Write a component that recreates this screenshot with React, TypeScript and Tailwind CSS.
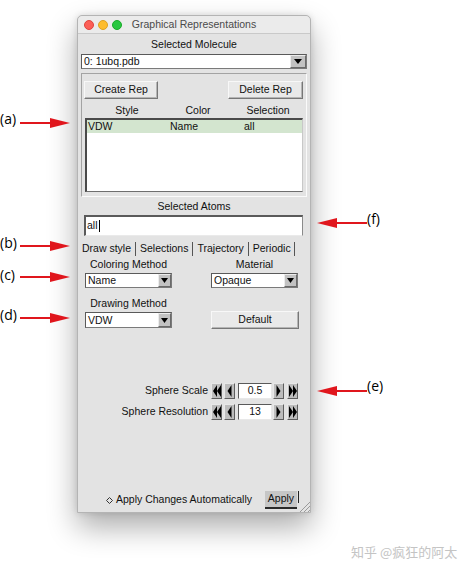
import React from "react";

const ui = "font-['Liberation_Sans',Arial,sans-serif] text-[10.5px] text-[#111]";

function DownTri({ w = 8, h = 5 }: { w?: number; h?: number }) {
  return (
    <svg width={w} height={h} viewBox={`0 0 ${w} ${h}`}>
      <polygon points={`0,0 ${w},0 ${w / 2},${h}`} fill="#000" />
    </svg>
  );
}

function Dropdown({ text, className, arrowW = 13 }: { text: string; className: string; arrowW?: number }) {
  return (
    <div className={`flex bg-white border border-[#7a7a7a] border-t-[#5a5a5a] border-l-[#5a5a5a] ${className}`}>
      <div className="flex-1 pl-[2px] leading-[13px] flex items-center">{text}</div>
      <div
        className="flex items-center justify-center bg-[#c2c2c2] border border-t-[#ececec] border-l-[#ececec] border-b-[#6a6a6a] border-r-[#6a6a6a]"
        style={{ width: arrowW }}
      >
        <DownTri w={arrowW > 13 ? 8 : 7} h={5} />
      </div>
    </div>
  );
}

function RaisedButton({ label, className }: { label: string; className: string }) {
  return (
    <div
      className={`flex items-center justify-center bg-[#e9e9e9] border border-t-[#f8f8f8] border-l-[#f8f8f8] border-b-[#777] border-r-[#777] shadow-[inset_-1px_-1px_0_#b5b5b5] ${className}`}
    >
      {label}
    </div>
  );
}

function Tri({ dir, double }: { dir: "l" | "r"; double?: boolean }) {
  const one = (x: number) =>
    dir === "l"
      ? `${x + 4},0 ${x},6 ${x + 4},12`
      : `${x},0 ${x + 4},6 ${x},12`;
  return (
    <svg width={double ? 8 : 5} height={12} viewBox={`0 0 ${double ? 8 : 5} 12`}>
      {double ? (
        <>
          <polygon points={one(0)} fill="#000" />
          <polygon points={one(4)} fill="#000" />
        </>
      ) : (
        <polygon points={one(0.5)} fill="#000" />
      )}
    </svg>
  );
}

function SpinBtn({ dir, double }: { dir: "l" | "r"; double?: boolean }) {
  return (
    <div className="w-[11px] h-full flex items-center justify-center bg-[#bdbdbd] border border-t-[#e8e8e8] border-l-[#e8e8e8] border-b-[#5e5e5e] border-r-[#5e5e5e]">
      <Tri dir={dir} double={double} />
    </div>
  );
}

function SpinRow({ label, value }: { label: string; value: string }) {
  return (
    <div className="flex items-center justify-end h-[16px] pr-[12px]">
      <span className="mr-[3px]">{label}</span>
      <div className="flex h-[16px] items-stretch">
        <SpinBtn dir="l" double />
        <div className="w-[2px]" />
        <SpinBtn dir="l" />
        <div className="w-[3px]" />
        <div className="w-[34px] bg-white border border-t-[#5a5a5a] border-l-[#5a5a5a] border-b-[#e8e8e8] border-r-[#e8e8e8] flex items-center justify-center">
          {value}
        </div>
        <div className="w-[1px]" />
        <SpinBtn dir="r" />
        <div className="w-[3px]" />
        <SpinBtn dir="r" double />
      </div>
    </div>
  );
}

function Arrow({ left }: { left?: boolean }) {
  return (
    <svg width={50} height={12} viewBox="0 0 50 12">
      {left ? (
        <>
          <line x1={18} y1={6} x2={50} y2={6} stroke="#e0161d" strokeWidth={2} />
          <polygon points="0,6 20,1 20,11" fill="#e0161d" />
        </>
      ) : (
        <>
          <line x1={0} y1={6} x2={32} y2={6} stroke="#e0161d" strokeWidth={2} />
          <polygon points="50,6 30,1 30,11" fill="#e0161d" />
        </>
      )}
    </svg>
  );
}

function Label({ t, x, y }: { t: string; x: number; y: number }) {
  return (
    <div
      className="absolute font-['Open_Sans',sans-serif] text-[14px] leading-[16px] text-black"
      style={{ left: x, top: y }}
    >
      {t}
    </div>
  );
}

export default function App() {
  return (
    <div className="relative w-[474px] h-[572px] bg-white overflow-hidden">
      <div className="pl-[77px] pt-[15px]">
        <div
          className={`w-[234px] h-[498px] flex flex-col bg-[#e3e3e3] border border-[#b4b4b4] rounded-t-[5px] shadow-[0_14px_30px_rgba(0,0,0,0.33),0_0_6px_rgba(0,0,0,0.12)] ${ui}`}
        >
          {/* title bar */}
          <div className="relative h-[18px] flex items-center justify-center bg-[#ebebeb] border-b border-[#c9c9c9] rounded-t-[5px]">
            <div className="absolute left-[6px] top-[4px] flex gap-[4px]">
              <div className="w-[10px] h-[10px] rounded-full bg-[#fc5f57] border border-[#e0443e]" />
              <div className="w-[10px] h-[10px] rounded-full bg-[#fdbc2e] border border-[#dea123]" />
              <div className="w-[10px] h-[10px] rounded-full bg-[#29c740] border border-[#1aab29]" />
            </div>
            <span className="text-[#4a4a4a] mt-[1px]">Graphical Representations</span>
          </div>

          {/* Selected Molecule */}
          <div className="h-[20px] flex items-center justify-center pt-[1px]">Selected Molecule</div>
          <Dropdown text="0: 1ubq.pdb" className="mx-[3px] h-[15px]" arrowW={16} />

          {/* group box */}
          <div className="mx-[3px] mt-[4px] h-[124px] border border-t-[#a3a3a3] border-l-[#a3a3a3] border-b-[#fafafa] border-r-[#fafafa] flex flex-col">
            <div className="flex justify-between pl-[2px] pr-[3px] pt-[7px]">
              <RaisedButton label="Create Rep" className="w-[74px] h-[18px]" />
              <RaisedButton label="Delete Rep" className="w-[75px] h-[18px]" />
            </div>
            <div className="flex h-[13px] mt-[5px] items-center pl-[3px]">
              <span className="w-[84px] text-center">Style</span>
              <span className="w-[58px] text-center">Color</span>
              <span className="w-[64px] ml-[9px] text-center">Selection</span>
            </div>
            <div className="ml-[3px] w-[218px] h-[74px] mt-[1px] bg-white border border-[#6e6e6e] border-t-2 border-l-2 border-t-[#4a4a4a] border-l-[#4a4a4a] border-r-[#c8c8c8]">
              <div className="flex h-[13px] items-center bg-[#d3e5cf] pl-[1px]">
                <span className="w-[82px]">VDW</span>
                <span className="w-[74px]">Name</span>
                <span>all</span>
              </div>
            </div>
          </div>

          {/* Selected Atoms */}
          <div className="h-[18px] flex items-center justify-center pt-[2px]">Selected Atoms</div>
          <div className="ml-[6px] mr-[7px] h-[21px] bg-white border border-[#8a8a8a] border-t-2 border-l-2 border-t-[#5a5a5a] border-l-[#5a5a5a] border-b-[#eaeaea] flex items-center pl-[1px]">
            <span>all</span>
            <span className="w-[1.5px] h-[12px] bg-black ml-[1px]" />
          </div>

          {/* tabs */}
          <div className="h-[16px] mt-[5px] flex items-center pl-[4px]">
            <span>Draw style</span>
            <span className="w-px h-[14px] bg-[#555] mx-[4px]" />
            <span>Selections</span>
            <span className="w-px h-[14px] bg-[#555] mx-[4px]" />
            <span>Trajectory</span>
            <span className="w-px h-[14px] bg-[#555] mx-[4px]" />
            <span>Periodic</span>
            <span className="w-px h-[14px] bg-[#555] ml-[3px]" />
          </div>

          {/* coloring / material */}
          <div className="flex pl-[7px] gap-[39px]">
            <div className="w-[87px] flex flex-col">
              <div className="h-[15px] flex items-center justify-center">Coloring Method</div>
              <Dropdown text="Name" className="h-[15px] mt-[1px]" />
            </div>
            <div className="w-[87px] flex flex-col">
              <div className="h-[15px] flex items-center justify-center">Material</div>
              <Dropdown text="Opaque" className="h-[15px] mt-[1px]" />
            </div>
          </div>

          {/* drawing method */}
          <div className="flex pl-[7px] gap-[39px] mt-[9px]">
            <div className="w-[87px] flex flex-col">
              <div className="h-[14px] flex items-center justify-center">Drawing Method</div>
              <Dropdown text="VDW" className="h-[16px] mt-[1px]" />
            </div>
            <div className="w-[88px] flex flex-col">
              <div className="h-[14px]" />
              <RaisedButton label="Default" className="h-[18px]" />
            </div>
          </div>

          {/* sphere */}
          <div className="mt-[54px]">
            <SpinRow label="Sphere Scale" value="0.5" />
          </div>
          <div className="mt-[5px]">
            <SpinRow label="Sphere Resolution" value="13" />
          </div>

          <div className="flex-1" />

          {/* bottom */}
          <div className="relative h-[22px] flex items-start">
            <div className="flex items-center h-[18px] ml-[28px] mt-[1px]">
              <svg width={7} height={7} viewBox="0 0 7 7" className="mr-[3px]">
                <polygon points="3.5,0.5 6.5,3.5 3.5,6.5 0.5,3.5" fill="none" stroke="#333" strokeWidth={1} />
              </svg>
              <span>Apply Changes Automatically</span>
            </div>
            <div className="ml-[13px] mt-[1px] w-[32px] h-[18px] flex items-center justify-center bg-[#c6c6c6] border-b-2 border-[#2a2a2a]">
              Apply
            </div>
            <div className="w-px h-[12px] bg-[#222] mt-[1px] ml-[1px]" />
            <svg width={12} height={10} viewBox="0 0 12 10" className="absolute right-0 bottom-0">
              <line x1={2} y1={10} x2={12} y2={0} stroke="#9a9a9a" strokeWidth={1} />
              <line x1={6} y1={10} x2={12} y2={4} stroke="#9a9a9a" strokeWidth={1} />
              <line x1={10} y1={10} x2={12} y2={8} stroke="#9a9a9a" strokeWidth={1} />
            </svg>
          </div>
        </div>
      </div>

      {/* annotations */}
      <Label t="(a)" x={0} y={111} />
      <div className="absolute left-[20px] top-[117px]"><Arrow /></div>
      <Label t="(b)" x={0} y={235} />
      <div className="absolute left-[20px] top-[240px]"><Arrow /></div>
      <Label t="(c)" x={0} y={267} />
      <div className="absolute left-[20px] top-[271px]"><Arrow /></div>
      <Label t="(d)" x={0} y={307} />
      <div className="absolute left-[20px] top-[312px]"><Arrow /></div>
      <Label t="(f)" x={367} y={211} />
      <div className="absolute left-[317px] top-[217px]"><Arrow left /></div>
      <Label t="(e)" x={367} y={378} />
      <div className="absolute left-[317px] top-[385px]"><Arrow left /></div>

      {/* watermark */}
      <div className="absolute left-[351px] top-[543px] font-['Noto_Sans_CJK_SC',sans-serif] text-[13px] leading-[18px] text-[#c4c4c4] whitespace-nowrap">
        知乎 @疯狂的阿太
      </div>
    </div>
  );
}
